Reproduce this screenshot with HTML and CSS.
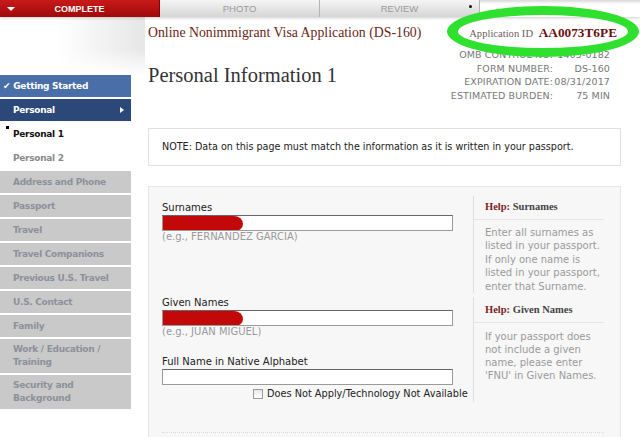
FILE: index.html
```html
<!DOCTYPE html>
<html lang="en">
<head>
    <meta charset="UTF-8">
    <title>Online Nonimmigrant Visa Application (DS-160)</title>
    <link rel="stylesheet" href="styles.css">
</head>
<body>
    <div class="tabs">
        <div class="tab tab-complete"><span class="tab-arrow"></span>COMPLETE</div>
        <div class="tab">PHOTO</div>
        <div class="tab tab-review">REVIEW<span class="tab-dot"></span></div>
        <div class="tab tab-blank"></div>
    </div>

    <div class="page">
        <aside class="side">
            <div class="side-top"></div>
            <ul class="nav">
                <li class="nav-item done"><span class="check">&#10004;</span>Getting Started</li>
                <li class="nav-item current">Personal<span class="caret"></span></li>
                <li class="nav-item sub active"><span class="marker"></span>Personal 1</li>
                <li class="nav-item sub">Personal 2</li>
                <li class="nav-item">Address and Phone</li>
                <li class="nav-item">Passport</li>
                <li class="nav-item">Travel</li>
                <li class="nav-item">Travel Companions</li>
                <li class="nav-item">Previous U.S. Travel</li>
                <li class="nav-item">U.S. Contact</li>
                <li class="nav-item">Family</li>
                <li class="nav-item tall">Work / Education /<br>Training</li>
                <li class="nav-item tall">Security and<br>Background</li>
            </ul>
        </aside>

        <main class="main">
            <div class="app-head">
                <div class="app-title">Online Nonimmigrant Visa Application (DS-160)</div>
                <div class="app-id">Application ID <strong>AA0073T6PE</strong></div>
            </div>

            <div class="title-row">
                <h1 class="page-title">Personal Information 1</h1>
                <div class="omb">
                    <span class="omb-label">OMB CONTROL NO:</span><span class="omb-value">1405-0182</span>
                    <span class="omb-label">FORM NUMBER:</span><span class="omb-value">DS-160</span>
                    <span class="omb-label">EXPIRATION DATE:</span><span class="omb-value">08/31/2017</span>
                    <span class="omb-label">ESTIMATED BURDEN:</span><span class="omb-value">75 MIN</span>
                </div>
            </div>

            <div class="note">NOTE: Data on this page must match the information as it is written in your passport.</div>

            <div class="form-box">
                <div class="form-row first">
                    <div class="fields">
                        <label class="field-label">Surnames</label>
                        <div class="input"><span class="redact"></span></div>
                        <div class="example">(e.g., FERNANDEZ GARCIA)</div>
                    </div>
                    <div class="help">
                        <div class="help-title"><span class="help-word">Help:</span> Surnames</div>
                        <p class="help-text">Enter all surnames as<br>listed in your passport.<br>If only one name is<br>listed in your passport,<br>enter that Surname.</p>
                    </div>
                </div>

                <div class="form-row second">
                    <div class="fields">
                        <label class="field-label">Given Names</label>
                        <div class="input"><span class="redact"></span></div>
                        <div class="example">(e.g., JUAN MIGUEL)</div>
                        <label class="field-label spaced">Full Name in Native Alphabet</label>
                        <div class="input"></div>
                        <div class="check-row"><span class="checkbox"></span>Does Not Apply/Technology Not Available</div>
                    </div>
                    <div class="help">
                        <div class="help-title"><span class="help-word">Help:</span> Given Names</div>
                        <p class="help-text">If your passport does<br>not include a given<br>name, please enter<br>'FNU' in Given Names.</p>
                    </div>
                </div>

                <div class="form-rule"></div>
            </div>
        </main>
    </div>

    <div class="callout"></div>
</body>
</html>
```

FILE: styles.css
```css
body {
    margin: 0;
    width: 640px;
    height: 437px;
    overflow: hidden;
    position: relative;
    background: #fff;
    font-family: "DejaVu Sans", sans-serif;
    color: #222;
}
.tabs {
    display: flex;
    height: 17px;
    box-shadow: 0 1px 3px rgba(0, 0, 0, 0.2);
    position: relative;
    z-index: 1;
}
.tab {
    width: 160px;
    display: flex;
    align-items: center;
    justify-content: center;
    font-family: "Liberation Sans", sans-serif;
    font-size: 9.5px;
    color: #9a9a9a;
    background: linear-gradient(#f5f5f5, #d5d5d5);
    border-right: 1px solid #b5b5b5;
    box-sizing: border-box;
    position: relative;
}
.tab-complete {
    background: linear-gradient(#c81a1a, #a00a0a);
    color: #fff;
    font-weight: bold;
    font-size: 9px;
    border-right: 1px solid #8a0000;
}
.tab-arrow {
    position: absolute;
    left: 7px;
    top: 7px;
    border-left: 4px solid transparent;
    border-right: 4px solid transparent;
    border-top: 4px solid #fff;
}
.tab-dot {
    position: absolute;
    right: 7px;
    top: 5px;
    width: 3px;
    height: 3px;
    border-radius: 50%;
    background: #111;
}
.tab-blank {
    background: linear-gradient(#d8d8d8, #fff 4px);
    border-right: none;
}

.page {
    display: flex;
}
.side {
    width: 145px;
    flex-shrink: 0;
}
.side-top {
    height: 58px;
    background:
        linear-gradient(to bottom, rgba(255, 255, 255, 0) 55%, #fff),
        linear-gradient(to right, #fff 40%, #e6e6e6);
}
.nav {
    list-style: none;
    margin: 0;
    padding: 0;
    width: 131px;
    display: flex;
    flex-direction: column;
    gap: 2px;
}
.nav-item {
    height: 22px;
    box-sizing: border-box;
    padding-left: 13px;
    display: flex;
    align-items: center;
    position: relative;
    background: #c9c9c9;
    color: #8b919b;
    font-size: 9px;
    font-weight: bold;
    letter-spacing: -0.3px;
}
.nav-item.tall {
    height: 34px;
    line-height: 13px;
}
.nav-item.done {
    background: #4a6fa8;
    color: #fff;
    padding-left: 3px;
}
.check {
    font-size: 9px;
    margin-right: 3px;
}
.nav-item.current {
    background: #2c4878;
    color: #fff;
}
.caret {
    position: absolute;
    right: 7px;
    top: 8px;
    border-top: 3px solid transparent;
    border-bottom: 3px solid transparent;
    border-left: 4px solid #fff;
}
.nav-item.sub {
    background: #fff;
    color: #8a8a8a;
}
.nav-item.active {
    color: #111;
}
.marker {
    position: absolute;
    left: 6px;
    top: 3px;
    width: 3px;
    height: 3px;
    background: #000;
}

.main {
    width: 473px;
    margin-left: 3px;
}
.app-head {
    height: 32px;
    display: flex;
    align-items: center;
    justify-content: space-between;
    padding-right: 4px;
    font-family: "Liberation Serif", serif;
}
.app-title {
    font-size: 13.8px;
    color: #6b2520;
}
.app-id {
    font-size: 10.6px;
    color: #6e6060;
    white-space: nowrap;
}
.app-id strong {
    font-size: 13.3px;
    color: #6b1010;
    margin-left: 3px;
}
.title-row {
    display: flex;
    justify-content: space-between;
    align-items: flex-start;
    padding-right: 11px;
    margin-top: -1px;
}
.page-title {
    margin: 16px 0 0;
    font-family: "Liberation Serif", serif;
    font-weight: normal;
    font-size: 20.5px;
    line-height: 22px;
    color: #333;
}
.omb {
    display: grid;
    grid-template-columns: auto 57px;
    font-size: 9.5px;
    line-height: 13.7px;
    color: #777;
    text-align: right;
    letter-spacing: 0.1px;
}
.note {
    margin-top: 25px;
    height: 38px;
    box-sizing: border-box;
    border: 1px solid #e0e0e0;
    padding-left: 13px;
    display: flex;
    align-items: center;
    font-size: 9.6px;
}
.form-box {
    margin-top: 20px;
    height: 260px;
    background: #f7f7f7;
    border: 1px solid #e6e6e6;
    padding: 9px 16px 0 13px;
}
.form-row {
    display: flex;
}
.form-row.second {
    margin-top: 4px;
}
.fields {
    width: 311px;
    flex-shrink: 0;
}
.first .fields {
    padding-top: 6px;
}
.field-label {
    display: block;
    font-size: 10px;
    line-height: 12px;
}
.field-label.spaced {
    margin-top: 18px;
}
.input {
    width: 291px;
    height: 16px;
    box-sizing: border-box;
    margin-top: 1px;
    background: #fff;
    border: 1px solid #9a9a9a;
    border-top-color: #666;
    overflow: hidden;
}
.redact {
    display: block;
    width: 80px;
    height: 15px;
    background: #c20808;
    border-radius: 0 9px 8px 2px / 0 8px 7px 2px;
}
.example {
    font-size: 10px;
    line-height: 12px;
    color: #9a9a9a;
}
.check-row {
    display: flex;
    align-items: center;
    height: 17px;
    padding-left: 91px;
    font-size: 9.75px;
    white-space: nowrap;
}
.checkbox {
    width: 10px;
    height: 10px;
    box-sizing: border-box;
    border: 1px solid #9a9a9a;
    background: linear-gradient(#e8e8e8, #fff);
    margin-right: 4px;
}
.help {
    flex: 1;
    border-left: 1px solid #dedede;
    padding-left: 11px;
}
.help-title {
    font-family: "Liberation Serif", serif;
    font-weight: bold;
    font-size: 10.5px;
    line-height: 14px;
    color: #444;
    padding: 4px 0 5px;
    margin-left: -11px;
    padding-left: 11px;
    border-bottom: 1px solid #e6e6e6;
}
.second .help-title {
    padding-top: 6px;
}
.help-word {
    color: #7a1f1f;
}
.help-text {
    margin: 6px 0 0;
    font-size: 10px;
    line-height: 13.5px;
    color: #9a9a9a;
    white-space: nowrap;
}
.second .help-text {
    margin-top: 7px;
    line-height: 13px;
}
.form-rule {
    margin-top: 30px;
    border-top: 1px dotted #dcdcdc;
}

.callout {
    position: absolute;
    z-index: 2;
    left: 447px;
    top: 6px;
    width: 192px;
    height: 51px;
    box-sizing: border-box;
    border: 9px solid #2fe02f;
    border-width: 9px 11px;
    border-radius: 50%;
}
```
